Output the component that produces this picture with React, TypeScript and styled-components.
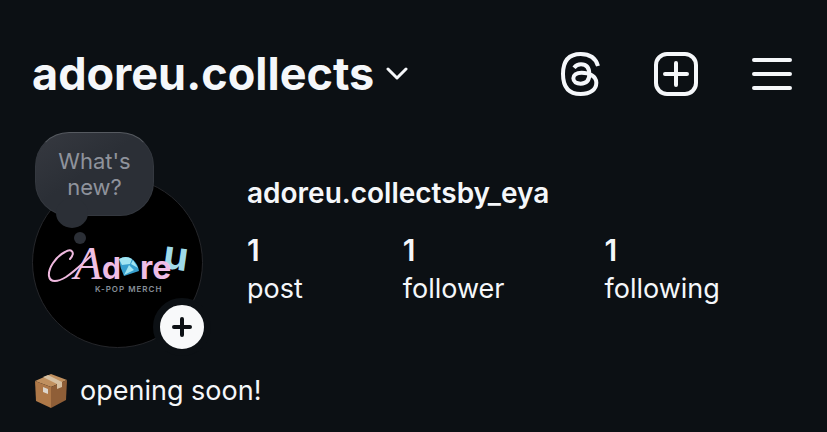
import React from "react";
import styled, { createGlobalStyle } from "styled-components";

const Global = createGlobalStyle`
  * { box-sizing: border-box; }
  body { margin: 0; background: #0c1014; }
`;

const Page = styled.main`
  min-height: 100vh;
  padding: 48px 32px 16px;
  background: #0c1014;
  color: #f5f7fa;
  font-family: Inter, "Liberation Sans", sans-serif;
`;

const Header = styled.header`
  display: flex;
  align-items: center;
  justify-content: space-between;
  height: 52px;
  padding-right: 2px;
`;

const Heading = styled.h1`
  margin: 0;
  font-size: 45px;
  line-height: 52px;
`;

const AccountButton = styled.button`
  display: flex;
  align-items: center;
  gap: 12px;
  padding: 0;
  border: 0;
  background: none;
  color: inherit;
  font: inherit;
  font-weight: 700;
  cursor: pointer;
`;

const Actions = styled.nav`
  display: flex;
  align-items: center;
  gap: 52px;
`;

const IconButton = styled.button`
  display: flex;
  padding: 0;
  border: 0;
  background: none;
  color: inherit;
  cursor: pointer;
`;

const Profile = styled.section`
  display: flex;
  gap: 44px;
  margin-top: 32px;
`;

const AvatarArea = styled.div`
  position: relative;
  flex: none;
  width: 171px;
  padding-top: 45px;
`;

const Avatar = styled.div`
  height: 171px;
  overflow: hidden;
  border: 1px solid #25262a;
  border-radius: 50%;
  background: #000;
`;

const Note = styled.button`
  position: absolute;
  top: 0;
  left: 3px;
  width: 119px;
  height: 84px;
  padding: 0 16px;
  border: 1px solid #34383f;
  border-top-color: #565a60;
  border-radius: 34px;
  background: linear-gradient(145deg, #363940, #2b2f36 45%);
  color: #8f939c;
  font: 22px/26px Inter, sans-serif;
  cursor: pointer;

  &::before,
  &::after {
    content: "";
    position: absolute;
    border-radius: 50%;
    background: #2b2f36;
  }

  &::before {
    left: 20px;
    bottom: -13px;
    width: 32px;
    height: 30px;
  }

  &::after {
    left: 38px;
    bottom: -29px;
    width: 12px;
    height: 12px;
  }
`;

const AddButton = styled.button`
  position: absolute;
  right: -8px;
  bottom: -8px;
  display: flex;
  align-items: center;
  justify-content: center;
  width: 58px;
  height: 58px;
  padding: 0;
  border: 7px solid #0c1014;
  border-radius: 50%;
  background: #f8f9fa;
  color: #0c1014;
  cursor: pointer;
`;

const Details = styled.div`
  flex: 1;
  padding-top: 45px;
`;

const DisplayName = styled.h2`
  margin: 0;
  font-size: 28px;
  line-height: 32px;
  font-weight: 600;
`;

const Stats = styled.ul`
  display: flex;
  gap: 100px;
  margin: 22px 0 0;
  padding: 0;
  list-style: none;
`;

const Stat = styled.li`
  display: flex;
  flex-direction: column;
  gap: 2px;
  font-size: 27px;
  line-height: 36px;
`;

const Count = styled.strong`
  font-size: 30px;
  line-height: 38px;
  font-weight: 600;
`;

const Bio = styled.p`
  display: flex;
  align-items: center;
  gap: 10px;
  margin: 25px 0 0;
  font-size: 27px;
  line-height: 36px;
`;

const ThreadsIcon = () => (
  <svg width="40" height="46" viewBox="62 33 120 138" fill="none" stroke="currentColor" strokeWidth="12" aria-hidden="true">
    <path d="M173 78C166 53 147 42 121 42C84 42 68 64 68 102C68 140 84 162 121 162C150 162 168 148 168 128C168 108 146 98 124 98C107 98 99 106 99 115C99 125 108 131 121 131C139 131 147 120 147 103C147 84 139 73 122 73C112 73 106 77 101 83" />
  </svg>
);

const CreateIcon = () => (
  <svg width="46" height="46" viewBox="0 0 46 46" fill="none" stroke="currentColor" strokeWidth="4" strokeLinecap="round" aria-hidden="true">
    <rect x="3" y="3" width="40" height="40" rx="11" />
    <path d="M23 12v22M12 23h22" />
  </svg>
);

const MenuIcon = () => (
  <svg width="42" height="46" viewBox="0 0 42 46" stroke="currentColor" strokeWidth="4" strokeLinecap="round" aria-hidden="true">
    <path d="M3 9h36M3 23h36M3 37h36" />
  </svg>
);

const Chevron = () => (
  <svg width="22" height="14" viewBox="0 0 22 14" fill="none" stroke="currentColor" strokeWidth="3" strokeLinecap="round" strokeLinejoin="round" aria-hidden="true">
    <path d="M2 2l9 9 9-9" />
  </svg>
);

const ShopLogo = () => (
  <svg width="169" height="169" viewBox="33 178 169 169" role="img" aria-label="Adore U K-pop merch">
    <text x="74" y="279" fontFamily="Liberation Serif, serif" fontStyle="italic" fontSize="46" fill="#efc0e4">A</text>
    <path d="M70 259C76 252 71 248 65 252C55 257 48 269 49 276C50 283 58 282 66 277C75 271 84 262 91 256" fill="none" stroke="#efb9df" strokeWidth="2" strokeLinecap="round" />
    <text x="163" y="269" fontFamily="Inter, sans-serif" fontWeight="700" fontSize="40" fill="#9fdbea" transform="rotate(8 172 260)">u</text>
    <g fontFamily="Inter, sans-serif" fontWeight="700" fontSize="30" fill="#efbde6">
      <text x="102" y="279">d</text>
      <text x="140" y="279" fontSize="32">re</text>
    </g>
    <path d="M119 259Q126 255 132 259Q138 264 139 271L124 276Q120 268 119 259z" fill="#369fce" />
    <path d="M119 259Q126 255 132 259L130 264L122 265zM131 264L133 260L138 268zM124 275L129 265L134 270z" fill="#a1e5f2" />
    <text x="95" y="292" fontFamily="Inter, sans-serif" fontWeight="600" fontSize="8" letterSpacing="1" fill="#87909a">K-POP MERCH</text>
  </svg>
);

const PackageIcon = () => (
  <svg width="38" height="36" viewBox="0 0 38 36" aria-hidden="true">
    <path d="M3 8L19 1l16 6-16 7z" fill="#c0905f" />
    <path d="M3 8l16 6v21L4 28z" fill="#ae7848" />
    <path d="M19 14l16-7-1 20-15 8z" fill="#8f5e37" />
    <path d="M11 4l5-2 14 7v5l-5 2v-5z" fill="#d6c0a2" />
    <path d="M11 14l5 2v5l-5-2z" fill="#ddd5cb" />
  </svg>
);

const stats = [
  { count: 1, label: "post" },
  { count: 1, label: "follower" },
  { count: 1, label: "following" },
];

export default function App() {
  return (
    <Page>
      <Global />
      <Header>
        <Heading>
          <AccountButton>
            adoreu.collects
            <Chevron />
          </AccountButton>
        </Heading>
        <Actions aria-label="Profile actions">
          <IconButton aria-label="Threads"><ThreadsIcon /></IconButton>
          <IconButton aria-label="Create"><CreateIcon /></IconButton>
          <IconButton aria-label="Menu"><MenuIcon /></IconButton>
        </Actions>
      </Header>
      <Profile>
        <AvatarArea>
          <Avatar><ShopLogo /></Avatar>
          <Note>What's new?</Note>
          <AddButton aria-label="Add story">
            <svg width="22" height="22" viewBox="0 0 22 22" stroke="currentColor" strokeWidth="4" strokeLinecap="round" aria-hidden="true">
              <path d="M11 3v16M3 11h16" />
            </svg>
          </AddButton>
        </AvatarArea>
        <Details>
          <DisplayName>adoreu.collectsby_eya</DisplayName>
          <Stats>
            {stats.map((stat) => (
              <Stat key={stat.label}>
                <Count>{stat.count}</Count>
                {stat.label}
              </Stat>
            ))}
          </Stats>
        </Details>
      </Profile>
      <Bio>
        <PackageIcon />
        opening soon!
      </Bio>
    </Page>
  );
}
